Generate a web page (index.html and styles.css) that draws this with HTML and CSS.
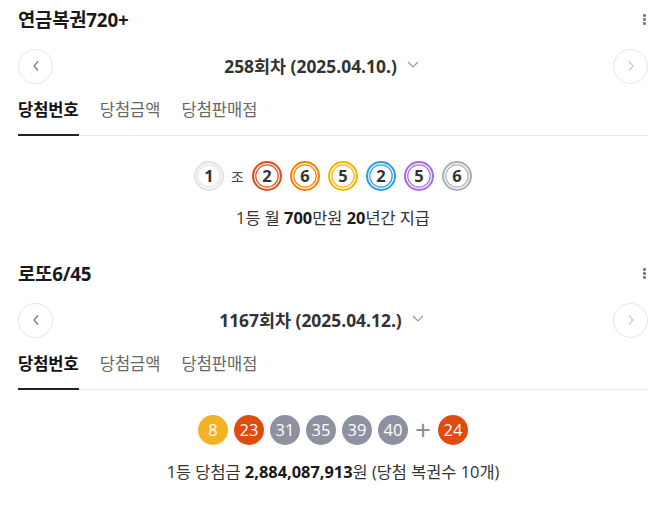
FILE: index.html
```html
<!DOCTYPE html>
<html lang="ko">
<head>
<meta charset="utf-8">
<link rel="stylesheet" href="styles.css">
</head>
<body>
<div class="page">
  <section class="card">
    <div class="head">
      <h2 class="title">연금복권720+</h2>
      <span class="kebab"><i></i><i></i><i></i></span>
    </div>
    <div class="nav">
      <button class="circ"><svg width="8" height="12" viewBox="0 0 8 12"><path d="M6 1.5 L2 6 L6 10.5" fill="none" stroke="#777" stroke-width="1.2"/></svg></button>
      <div class="round"><span class="round-t">258회차 (2025.04.10.)</span><svg class="dd" width="12" height="7" viewBox="0 0 12 7"><path d="M1 1 L6 6 L11 1" fill="none" stroke="#999" stroke-width="1.1"/></svg></div>
      <button class="circ"><svg width="8" height="12" viewBox="0 0 8 12"><path d="M2 1.5 L6 6 L2 10.5" fill="none" stroke="#c8c8c8" stroke-width="1.2"/></svg></button>
    </div>
    <div class="tabs">
      <span class="tab on">당첨번호</span>
      <span class="tab">당첨금액</span>
      <span class="tab">당첨판매점</span>
    </div>
    <div class="balls">
      <span class="ring g0">1</span>
      <span class="jo">조</span>
      <span class="ring c1">2</span>
      <span class="ring c2">6</span>
      <span class="ring c3">5</span>
      <span class="ring c4">2</span>
      <span class="ring c5">5</span>
      <span class="ring c6">6</span>
    </div>
    <p class="info">1등 월 <b>700</b>만원 <b>20</b>년간 지급</p>
  </section>

  <section class="card">
    <div class="head">
      <h2 class="title">로또6/45</h2>
      <span class="kebab"><i></i><i></i><i></i></span>
    </div>
    <div class="nav">
      <button class="circ"><svg width="8" height="12" viewBox="0 0 8 12"><path d="M6 1.5 L2 6 L6 10.5" fill="none" stroke="#777" stroke-width="1.2"/></svg></button>
      <div class="round"><span class="round-t">1167회차 (2025.04.12.)</span><svg class="dd" width="12" height="7" viewBox="0 0 12 7"><path d="M1 1 L6 6 L11 1" fill="none" stroke="#999" stroke-width="1.1"/></svg></div>
      <button class="circ"><svg width="8" height="12" viewBox="0 0 8 12"><path d="M2 1.5 L6 6 L2 10.5" fill="none" stroke="#c8c8c8" stroke-width="1.2"/></svg></button>
    </div>
    <div class="tabs">
      <span class="tab on">당첨번호</span>
      <span class="tab">당첨금액</span>
      <span class="tab">당첨판매점</span>
    </div>
    <div class="balls lotto">
      <span class="ball y">8</span>
      <span class="ball r">23</span>
      <span class="ball gr">31</span>
      <span class="ball gr">35</span>
      <span class="ball gr">39</span>
      <span class="ball gr">40</span>
      <span class="plus">+</span>
      <span class="ball r">24</span>
    </div>
    <p class="info">1등 당첨금 <b>2,884,087,913</b>원 (당첨 복권수 10개)</p>
  </section>
</div>
</body>
</html>
```

FILE: styles.css
```css
* { box-sizing: border-box; }
html, body { margin: 0; padding: 0; background: #fff; }
body {
  font-family: "Open Sans", "Noto Sans CJK KR", sans-serif;
  color: #222;
}
.page { padding: 0 11px 0 18px; }
.card { padding-top: 8px; padding-bottom: 26px; }
.head {
  display: flex;
  align-items: center;
  justify-content: space-between;
  height: 24px;
}
.title {
  margin: 0;
  font-size: 18.8px;
  font-weight: 700;
  line-height: 24px;
  color: #1a1a1a;
  letter-spacing: -0.2px;
}
.kebab {
  display: flex;
  flex-direction: column;
  gap: 1.6px;
  margin-right: 2px;
  margin-top: -1px;
}
.kebab i {
  display: block;
  width: 2.6px;
  height: 2.6px;
  border-radius: 50%;
  background: #777;
}
.nav {
  display: flex;
  align-items: center;
  margin-top: 16px;
  height: 36px;
}
.circ {
  width: 35px;
  height: 35px;
  border: 1px solid #e6e6e6;
  border-radius: 50%;
  background: #fff;
  padding: 0;
  display: flex;
  align-items: center;
  justify-content: center;
  flex: none;
}
.round {
  flex: 1;
  display: flex;
  align-items: center;
  justify-content: center;
  padding-right: 23px;
}
.round-t {
  font-size: 17.4px;
  font-weight: 700;
  color: #333;
  line-height: 22px;
}
.dd { margin-left: 10px; margin-top: -3px; }
.tabs {
  display: flex;
  margin-top: 15px;
  border-bottom: 1px solid #ececec;
}
.tab {
  font-size: 16.5px;
  line-height: 20px;
  padding-bottom: 16px;
  margin-right: 21px;
  color: #666;
  font-family: "Noto Sans CJK KR", sans-serif;
  margin-bottom: -1px;
}
.tab.on {
  color: #111;
  font-weight: 700;
  border-bottom: 2px solid #222;
  padding-bottom: 15px;
}
.balls {
  display: flex;
  align-items: center;
  justify-content: center;
  gap: 8px;
  margin-top: 25px;
  height: 30px;
}
.ring {
  width: 30px;
  height: 30px;
  border-radius: 50%;
  border: 2.2px solid var(--c);
  box-shadow: inset 0 0 0 1.2px #fff, inset 0 0 0 2.4px var(--c);
  display: flex;
  align-items: center;
  justify-content: center;
  font-size: 16.5px;
  font-weight: 700;
  color: #333;
  line-height: 1;
}
.g0 { --c: #e2e2e2; }
.c1 { --c: #e0501b; }
.c2 { --c: #ff7f00; }
.c3 { --c: #f5b400; }
.c4 { --c: #2d9fe5; }
.c5 { --c: #a56ee0; }
.c6 { --c: #aeaeb8; }
.jo {
  font-size: 14px;
  color: #444;
  font-family: "Noto Sans CJK KR", sans-serif;
  margin: 0 0 0 -1px;
}
.lotto { gap: 6px; }
.ball {
  width: 30px;
  height: 30px;
  border-radius: 50%;
  display: flex;
  align-items: center;
  justify-content: center;
  color: #fff;
  font-size: 16.5px;
  line-height: 1;
}
.y { background: #f2b326; }
.r { background: #e04b10; }
.gr { background: #8f91a0; }
.plus {
  font-size: 28px;
  font-weight: 400;
  color: #8a8a8a;
  line-height: 30px;
  margin: -3px 1px 0;
}
.info {
  margin: 17px 0 0;
  text-align: center;
  font-size: 16.4px;
  line-height: 20px;
  color: #333;
}
.info b { color: #1a1a1a; }
```
